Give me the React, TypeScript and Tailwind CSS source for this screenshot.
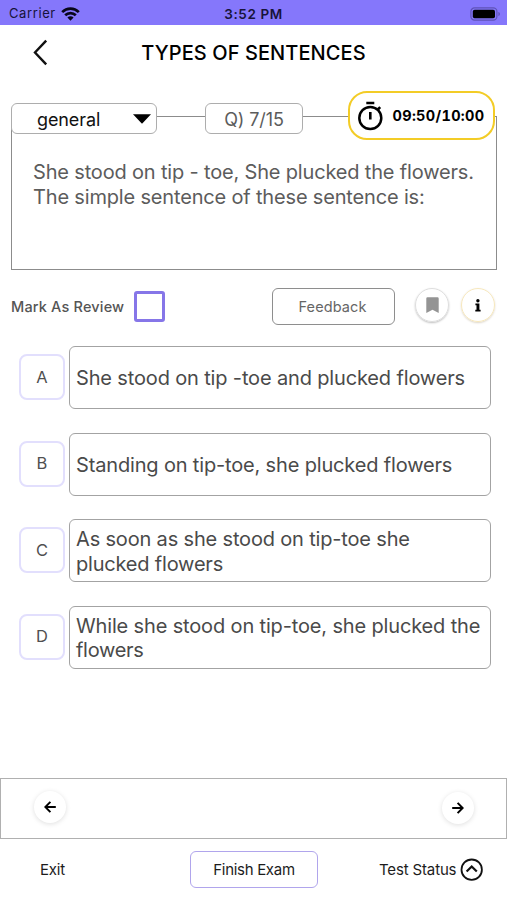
import React from "react";

type Option = { letter: string; lines: { text: string; tracking: string }[] };

const OPTIONS: Option[] = [
  { letter: "A", lines: [{ text: "She stood on tip -toe and plucked flowers", tracking: "tracking-[-0.15px]" }] },
  { letter: "B", lines: [{ text: "Standing on tip-toe, she plucked flowers", tracking: "tracking-[-0.16px]" }] },
  {
    letter: "C",
    lines: [
      { text: "As soon as she stood on tip-toe she", tracking: "tracking-[-0.17px]" },
      { text: "plucked flowers", tracking: "tracking-[-0.2px]" },
    ],
  },
  {
    letter: "D",
    lines: [
      { text: "While she stood on tip-toe, she plucked the", tracking: "tracking-[-0.15px]" },
      { text: "flowers", tracking: "tracking-[-0.3px]" },
    ],
  },
];

function StatusBar() {
  return (
    <div className="grid h-[25px] grid-cols-3 items-center bg-[#8577fb] pt-[3px] text-[13px] text-[#17133a]">
      <div className="flex items-center gap-[5px] pl-[9px]">
        <span className="tracking-[0.6px]">Carrier</span>
        <svg className="h-[14px] w-[19px]" viewBox="0 0 19 14">
          <g fill="none" stroke="#08061a" strokeWidth="2.7">
            <path d="M1.2 5.1a11.8 11.8 0 0 1 16.6 0" />
            <path d="M4.2 8.3a7.5 7.5 0 0 1 10.6 0" />
          </g>
          <path d="M9.5 13.7 6.4 10.6a4.4 4.4 0 0 1 6.2 0Z" fill="#08061a" />
        </svg>
      </div>
      <span className="pt-px text-center text-[13.5px] font-semibold tracking-[0.6px]">3:52 PM</span>
      <div className="flex justify-end pr-[6px]">
        <svg className="h-[14px] w-[31px]" viewBox="0 0 31 14">
          <rect x=".9" y=".9" width="26" height="12.2" rx="3.6" fill="none" stroke="#5f53b8" strokeWidth="1.2" />
          <rect x="2.8" y="2.8" width="22.2" height="8.4" rx="1.8" fill="#000" />
          <path d="M28.4 5v4c1-.3 1.5-1.1 1.5-2s-.5-1.7-1.500-2Z" fill="#5f53b8" />
        </svg>
      </div>
    </div>
  );
}

function Header() {
  return (
    <header className="grid h-[54px] grid-cols-[33px_1fr_33px] items-center">
      <svg className="ml-[33px] h-[27px] w-[15px]" viewBox="0 0 15 27">
        <path d="M13.2 1.6 2 13.5l11.2 11.900" fill="none" stroke="#111" strokeWidth="2.4" />
      </svg>
      <h1 className="pt-px text-center text-[20px] font-medium tracking-[0.08px] text-black">TYPES OF SENTENCES</h1>
    </header>
  );
}

function QuestionCard() {
  return (
    <section className="mt-[37px] mr-[10px] ml-[11px] h-[153.500px] border border-[#8c8c8c]">
      <div className="-mt-[26px] -ml-px flex h-[49px] items-center">
        <button className="mt-[6px] flex h-[31px] w-[146px] items-center justify-between rounded-[6px] border border-[#adadad] bg-white pr-[5px] pl-[25px] text-[18px] text-[#111]">
          <span className="pt-px tracking-[-0.1px]">general</span>
          <svg className="h-[10px] w-[18px]" viewBox="0 0 18 10">
            <path d="M0 .3h18L9 9.8Z" fill="#000" />
          </svg>
        </button>
        <div className="mt-[6px] ml-[48px] flex h-[31px] w-[98px] items-center justify-center rounded-[6px] border border-[#adadad] bg-white pt-px text-[18px] tracking-[-0.1px] text-[#5c5c5c]">
          Q) 7/15
        </div>
        <div className="ml-[45px] flex h-[49px] w-[147px] shrink-0 items-center rounded-[19px] border-2 border-[#f3cc26] bg-white pl-[7px]">
          <svg className="h-[30px] w-[26px]" viewBox="0 0 26 30">
            <g fill="none" stroke="#000">
              <circle cx="13.300" cy="17" r="11" strokeWidth="2.500" />
              <path d="M9.300 2h8" strokeWidth="2.500" />
              <path d="M13.300 11v7.500M20.800 8.500l2.400-2.400" strokeWidth="2.600" />
            </g>
          </svg>
          <span className="ml-[9.500px] pt-px text-[14.5px] font-bold tracking-[0.32px] whitespace-nowrap text-black tabular-nums">
            09:50/10:00
          </span>
        </div>
      </div>
      <p className="mt-[19.500px] ml-[21px] text-[20px] leading-[25px] tracking-[-0.17px] whitespace-nowrap text-[#5c5c5c]">
        She stood on tip - toe, She plucked the flowers.
        <br />
        The simple sentence of these sentence is:
      </p>
    </section>
  );
}

function Tools() {
  return (
    <div className="mt-[18.500px] flex h-[37px] items-center pl-[11px]">
      <span className="w-[123px] text-[14.5px] font-medium tracking-[0.17px] whitespace-nowrap text-[#555]">
        Mark As Review
      </span>
      <button className="h-[31px] w-[31px] rounded-[3px] border-3 border-[#8676e8]" />
      <button className="ml-[107px] h-[37px] w-[123px] rounded-[6px] border border-[#8e8e8e] pr-[2px] text-[14.5px] tracking-[0.1px] text-[#666]">
        Feedback
      </button>
      <button className="-mt-[3px] ml-[20px] flex h-[34px] w-[34px] items-center justify-center rounded-full border border-[#dedede] shadow-[0_1px_2px_rgba(0,0,0,0.25)]">
        <svg className="h-[16px] w-[13px]" viewBox="0 0 13 16">
          <path d="M.3 1.4Q.3.2 1.5.2h10q1.2 0 1.2 1.2V16l-6.200-3.300L.3 16Z" fill="#949494" />
        </svg>
      </button>
      <button className="-mt-[3px] ml-[12px] flex h-[34px] w-[34px] items-center justify-center rounded-full border border-[#f7e8bd] shadow-[0_1px_2px_rgba(100,70,0,0.22)]">
        <svg className="h-[13px] w-[6px]" viewBox="0 0 6 13">
          <circle cx="2.9" cy="1.7" r="1.7" fill="#000" />
          <path d="M.4 4.5h4v6.300h1.200v1.700H.3v-1.700h1.200V6.200H.4Z" fill="#000" />
        </svg>
      </button>
    </div>
  );
}

function Options() {
  return (
    <ul className="mt-[21px] flex flex-col gap-[23.5px] pl-[19px]">
      {OPTIONS.map(({ letter, lines }) => (
        <li key={letter} className="flex h-[63px] items-center gap-[4px]">
          <span className="-mt-px flex h-[46px] w-[46px] items-center justify-center rounded-[8px] border-2 border-[#e2dffd] text-[16.5px] text-[#505050]">
            {letter}
          </span>
          <div className="flex h-[63px] w-[422px] flex-col justify-center rounded-[6px] border border-[#a3a3a3] pt-[2px] pl-[6px] text-[20px] leading-[24.5px] whitespace-nowrap text-[#4a4a4a]">
            {lines.map(({ text, tracking }) => (
              <span key={text} className={tracking}>{text}</span>
            ))}
          </div>
        </li>
      ))}
    </ul>
  );
}

function ArrowIcon({ flip = false }: { flip?: boolean }) {
  return (
    <svg className={flip ? "h-[12px] w-[12px] -scale-x-100" : "h-[12px] w-[12px]"} viewBox="0 0 12 12">
      <path d="M6.4.9 1.3 6l5.100 5.100M1.500 6h10.300" fill="none" stroke="#000" strokeWidth="2" />
    </svg>
  );
}

function BottomBar() {
  return (
    <footer>
      <div className="flex h-[61px] items-center justify-between border border-[#b0b0b0] pr-[32px] pl-[33px]">
        <button className="-mt-[3px] flex h-[32px] w-[32px] items-center justify-center rounded-full shadow-[0_1px_5px_rgba(0,0,0,0.13)]">
          <ArrowIcon />
        </button>
        <button className="-mt-px flex h-[32px] w-[32px] items-center justify-center rounded-full shadow-[0_1px_5px_rgba(0,0,0,0.13)]">
          <ArrowIcon flip />
        </button>
      </div>
      <div className="flex h-[61px] items-center pl-[40px] text-[15px] whitespace-nowrap text-[#1c1c1c]">
        <span className="w-[150px] pt-px tracking-[-0.2px]">Exit</span>
        <button className="h-[37px] w-[128px] rounded-[6px] border-[1.5px] border-[#b0a5ec] pt-px tracking-[-0.3px]">
          Finish Exam
        </button>
        <span className="ml-[61px] w-[81px] pt-px tracking-[-0.15px]">Test Status</span>
        <svg className="h-[24px] w-[24px]" viewBox="0 0 24 24">
          <g fill="none" stroke="#111" strokeWidth="1.8">
            <circle cx="11.700" cy="11.700" r="10.200" />
            <path d="m6.600 13.500 5.100-5 5.100 5" strokeWidth="2.200" />
          </g>
        </svg>
      </div>
    </footer>
  );
}

export default function App() {
  return (
    <main className="flex h-[900px] w-[507px] flex-col overflow-hidden bg-white font-['Inter','Liberation_Sans',sans-serif]">
      <StatusBar />
      <Header />
      <QuestionCard />
      <Tools />
      <Options />
      <div className="mt-auto">
        <BottomBar />
      </div>
    </main>
  );
}
